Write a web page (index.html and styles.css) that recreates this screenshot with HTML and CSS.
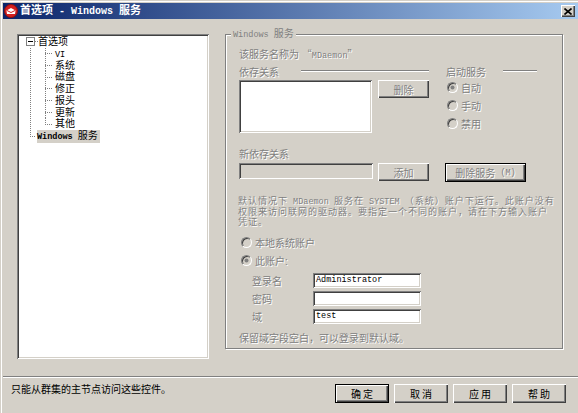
FILE: index.html
```html
<!DOCTYPE html>
<html lang="zh-CN">
<head>
    <meta charset="UTF-8">
    <title>首选项 - Windows 服务</title>
    <link rel="stylesheet" href="styles.css">
</head>
<body>
    <div class="window">
        <div class="titlebar">
            <svg class="app-icon" width="14" height="14" viewBox="0 0 14 14">
                <circle cx="7" cy="7" r="6.5" fill="#d42020" stroke="#8c1010"/>
                <path d="M2.5 6.5 L7 4 L11.5 6.5 L11 10 L3 10 Z" fill="#fff"/>
                <path d="M3 6.5 L7 8.5 L11 6.5" fill="none" stroke="#d42020" stroke-width="1"/>
            </svg>
            <span class="title">首选项<span class="en"> - Windows </span>服务</span>
            <span class="close-btn">
                <svg width="8" height="7" viewBox="0 0 8 7">
                    <path d="M0.5 0.5 L7.5 6.5 M7.5 0.5 L0.5 6.5" stroke="#000" stroke-width="1.6"/>
                </svg>
            </span>
        </div>

        <div class="main">
            <!-- дерево настроек -->
            <div class="tree">
                <div class="tree-root">
                    <span class="expander"></span>
                    <span class="stub"></span>
                    <span>首选项</span>
                </div>
                <div class="tree-children">
                    <div class="leaf"><span class="en">VI</span></div>
                    <div class="leaf">系统</div>
                    <div class="leaf">磁盘</div>
                    <div class="leaf">修正</div>
                    <div class="leaf">报头</div>
                    <div class="leaf">更新</div>
                    <div class="leaf">其他</div>
                </div>
                <div class="root-last"><span class="selected"><span class="en">Windows </span>服务</span></div>
            </div>

            <div class="group">
                <span class="group-title"><span class="en">Windows </span>服务</span>

                <div class="line dis">该服务名称为 <span class="cjk">“</span><span class="en">MDaemon</span><span class="cjk">”</span></div>

                <div class="deps">
                    <div class="deps-left">
                        <div class="sep-head">
                            <span class="dis">依存关系</span>
                            <span class="sep-line left-line"></span>
                        </div>
                        <div class="deps-body">
                            <div class="listbox"></div>
                            <div class="btn btn-del">删除</div>
                        </div>
                    </div>
                    <div class="deps-right">
                        <div class="sep-head">
                            <span class="dis">启动服务</span>
                            <span class="sep-line right-line"></span>
                        </div>
                        <div class="radio-list">
                            <div class="radio-row"><span class="radio checked"></span><span class="dis">自动</span></div>
                            <div class="radio-row"><span class="radio"></span><span class="dis">手动</span></div>
                            <div class="radio-row"><span class="radio"></span><span class="dis">禁用</span></div>
                        </div>
                    </div>
                </div>

                <div class="line dis new-label">新依存关系</div>
                <div class="new-row">
                    <div class="input-off"></div>
                    <div class="btn btn-add">添加</div>
                    <div class="btn btn-default btn-remove">删除服务<span class="en"> (M)</span></div>
                </div>

                <p class="info dis">默认情况下<span class="en"> MDaemon </span>服务在<span class="en"> SYSTEM </span>（系统）账户下运行。此账户没有<br>权限来访问联网的驱动器。要指定一个不同的账户，请在下方输入账户<br>凭证。</p>

                <div class="account">
                    <div class="radio-row acc-row"><span class="radio"></span><span class="dis">本地系统账户</span></div>
                    <div class="radio-row acc-row"><span class="radio checked"></span><span class="dis">此账户:</span></div>
                    <div class="fields">
                        <div class="field-row"><span class="field-label dis">登录名</span><div class="field en">Administrator</div></div>
                        <div class="field-row"><span class="field-label dis">密码</span><div class="field en"></div></div>
                        <div class="field-row"><span class="field-label dis">域</span><div class="field en">test</div></div>
                    </div>
                </div>

                <div class="line dis hint">保留域字段空白，可以登录到默认域。</div>
            </div>
        </div>

        <div class="separator"></div>

        <div class="footer">
            <span class="note">只能从群集的主节点访问这些控件。</span>
            <div class="buttons">
                <div class="btn btn-default btn-main">确定</div>
                <div class="btn btn-main">取消</div>
                <div class="btn btn-main">应用</div>
                <div class="btn btn-main">帮助</div>
            </div>
        </div>
    </div>
</body>
</html>
```

FILE: styles.css
```css
* {
    box-sizing: border-box;
}

body {
    margin: 0;
    background-color: #d4d0c8;
    font-family: "Liberation Sans", "Noto Sans CJK SC", sans-serif;
    font-size: 10px;
    color: #000;
    overflow: hidden;
}

.en {
    font-family: "Liberation Mono", monospace;
    font-size: 8.5px;
    letter-spacing: 0;
    white-space: pre;
}

.cjk {
    font-family: "Noto Sans CJK SC", sans-serif;
}

/* серый "отключённый" текст */
.dis {
    color: #808080;
    text-shadow: 1px 1px 0 #fff;
}

.window {
    width: 578px;
    height: 413px;
    padding: 3px 0 0 3px;
    box-shadow: inset 1px 1px 0 #d4d0c8, inset 2px 2px 0 #fff;
}

.titlebar {
    height: 16px;
    display: flex;
    align-items: center;
    padding-left: 1px;
    background: linear-gradient(to right, #0a246a, #a6caf0);
    color: #fff;
}

.app-icon {
    margin-right: 2px;
}

.title {
    font-size: 11px;
    font-weight: bold;
    line-height: 16px;
    white-space: pre;
}

.title .en {
    font-size: 10px;
    font-weight: bold;
}

.close-btn {
    margin-left: auto;
    margin-right: 3px;
    width: 14px;
    height: 12px;
    background: #d4d0c8;
    box-shadow: inset 1px 1px 0 #fff, inset -1px -1px 0 #404040, inset -2px -2px 0 #808080;
    display: flex;
    align-items: center;
    justify-content: center;
}

.main {
    display: flex;
    align-items: flex-start;
    gap: 16px;
    height: 357px;
    padding: 15px 0 0 14px;
}

/* дерево */
.tree {
    width: 192px;
    height: 325px;
    background: #fff;
    padding: 0 0 0 9px;
    line-height: 11.75px;
    box-shadow: inset 1px 1px 0 #808080, inset -1px -1px 0 #fff, inset 2px 2px 0 #404040, inset -2px -2px 0 #d4d0c8;
}

.tree-root {
    display: flex;
    align-items: center;
    height: 11.75px;
    margin-top: 2px;
}

.expander {
    width: 9px;
    height: 9px;
    border: 1px solid #808080;
    display: flex;
    align-items: center;
    justify-content: center;
}

.expander::before {
    content: "";
    width: 5px;
    height: 1px;
    background: #000;
}

.stub {
    width: 3px;
    height: 1px;
    background: repeating-linear-gradient(to right, #808080 0 1px, transparent 1px 2px);
}

.tree-children {
    margin-left: 4px;
    padding-left: 15px;
    background: repeating-linear-gradient(to bottom, #808080 0 1px, transparent 1px 2px) left top / 1px 100% no-repeat;
}

.leaf {
    height: 11.75px;
    padding-left: 10px;
    background:
        repeating-linear-gradient(to right, #808080 0 1px, transparent 1px 2px) left center / 8px 1px no-repeat,
        repeating-linear-gradient(to bottom, #808080 0 1px, transparent 1px 2px) left top / 1px 100% no-repeat;
}

.leaf:last-child {
    background:
        repeating-linear-gradient(to right, #808080 0 1px, transparent 1px 2px) left center / 8px 1px no-repeat,
        repeating-linear-gradient(to bottom, #808080 0 1px, transparent 1px 2px) left top / 1px 50% no-repeat;
}

.root-last {
    height: 12px;
    margin-left: 4px;
    padding-left: 7px;
    background:
        repeating-linear-gradient(to right, #808080 0 1px, transparent 1px 2px) left center / 6px 1px no-repeat,
        repeating-linear-gradient(to bottom, #808080 0 1px, transparent 1px 2px) left top / 1px 50% no-repeat;
}

.selected {
    display: inline-block;
    background: #d4d0c8;
    padding-right: 2px;
    line-height: 12px;
}

.selected .en {
    font-weight: bold;
}

/* группа "Windows 服务" */
.group {
    position: relative;
    width: 338px;
    height: 315px;
    border: 1px solid #808080;
    box-shadow: inset 1px 1px 0 #fff, 1px 1px 0 #fff;
    padding: 13px 0 0 13px;
}

.group-title {
    position: absolute;
    top: -7px;
    left: 5px;
    padding: 0 2px;
    line-height: 12px;
    background: #d4d0c8;
    color: #808080;
}

.line {
    line-height: 12px;
    white-space: nowrap;
}

.deps {
    display: flex;
    margin-top: 3px;
}

.deps-left {
    width: 190px;
}

.deps-right {
    width: 91px;
    margin-left: 17px;
}

.sep-head {
    display: flex;
    align-items: center;
    height: 12px;
}

.sep-line {
    flex: 1;
    border-top: 1px solid #808080;
    border-bottom: 1px solid #fff;
}

.left-line {
    margin-left: 22px;
}

.right-line {
    margin-left: 17px;
}

.deps-body {
    display: flex;
    align-items: flex-start;
    margin-top: 3px;
}

.listbox {
    width: 133px;
    height: 53px;
    background: #fff;
    box-shadow: inset 1px 1px 0 #808080, inset -1px -1px 0 #fff, inset 2px 2px 0 #404040, inset -2px -2px 0 #d4d0c8;
}

.btn {
    display: flex;
    align-items: center;
    justify-content: center;
    background: #d4d0c8;
    color: #808080;
    text-shadow: 1px 1px 0 #fff;
    box-shadow: inset 1px 1px 0 #fff, inset -1px -1px 0 #404040, inset -2px -2px 0 #808080;
    white-space: nowrap;
}

.btn-default {
    border: 1px solid #000;
}

.btn-del {
    width: 51px;
    height: 18px;
    margin-left: 6px;
}

.radio-list {
    margin-top: 1px;
}

.radio-row {
    display: flex;
    align-items: center;
    height: 18px;
}

.radio {
    width: 11px;
    height: 11px;
    margin: 0 3px 0 1px;
    border-radius: 50%;
    border: 1px solid;
    border-color: #808080 #fff #fff #808080;
    box-shadow: inset 1px 1px 0 #404040;
    display: flex;
    align-items: center;
    justify-content: center;
}

.radio.checked::before {
    content: "";
    width: 3px;
    height: 3px;
    border-radius: 50%;
    background: #808080;
    box-shadow: 0 0 0 0.5px #808080;
}

.new-label {
    margin-top: 16px;
}

.new-row {
    display: flex;
    align-items: flex-start;
    margin-top: 2px;
}

.input-off {
    width: 134px;
    height: 16px;
    background: #d4d0c8;
    box-shadow: inset 1px 1px 0 #808080, inset -1px -1px 0 #fff, inset 2px 2px 0 #404040, inset -2px -2px 0 #d4d0c8;
}

.btn-add {
    width: 51px;
    height: 18px;
    margin-left: 5px;
}

.btn-remove {
    width: 81px;
    height: 19px;
    margin-left: 16px;
}

.info {
    margin: 14px 0 0 -1px;
    font-size: 9px;
    letter-spacing: 1px;
    line-height: 10.2px;
    white-space: nowrap;
}

.info .en {
    font-size: 8.5px;
}

.account {
    margin-top: 6px;
}

.acc-row .radio {
    margin-left: 2px;
}

.fields {
    margin-top: 2px;
}

.field-row {
    display: flex;
    align-items: center;
    height: 18px;
}

.field-label {
    width: 61px;
    margin-left: 13px;
}

.field {
    width: 108px;
    height: 15px;
    padding-left: 3px;
    line-height: 15px;
    background: #fff;
    color: #000;
    box-shadow: inset 1px 1px 0 #808080, inset -1px -1px 0 #fff, inset 2px 2px 0 #404040, inset -2px -2px 0 #d4d0c8;
}

.hint {
    margin-top: 7px;
}

.separator {
    height: 2px;
    border-top: 1px solid #808080;
    border-bottom: 1px solid #fff;
}

.footer {
    display: flex;
    align-items: flex-start;
    padding: 6px 12px 0 8px;
}

.note {
    flex: 1;
    line-height: 12px;
}

.buttons {
    display: flex;
    gap: 5px;
}

.btn-main {
    width: 54px;
    height: 19px;
    color: #000;
    text-shadow: none;
    letter-spacing: 2px;
    padding-left: 2px;
}
```
